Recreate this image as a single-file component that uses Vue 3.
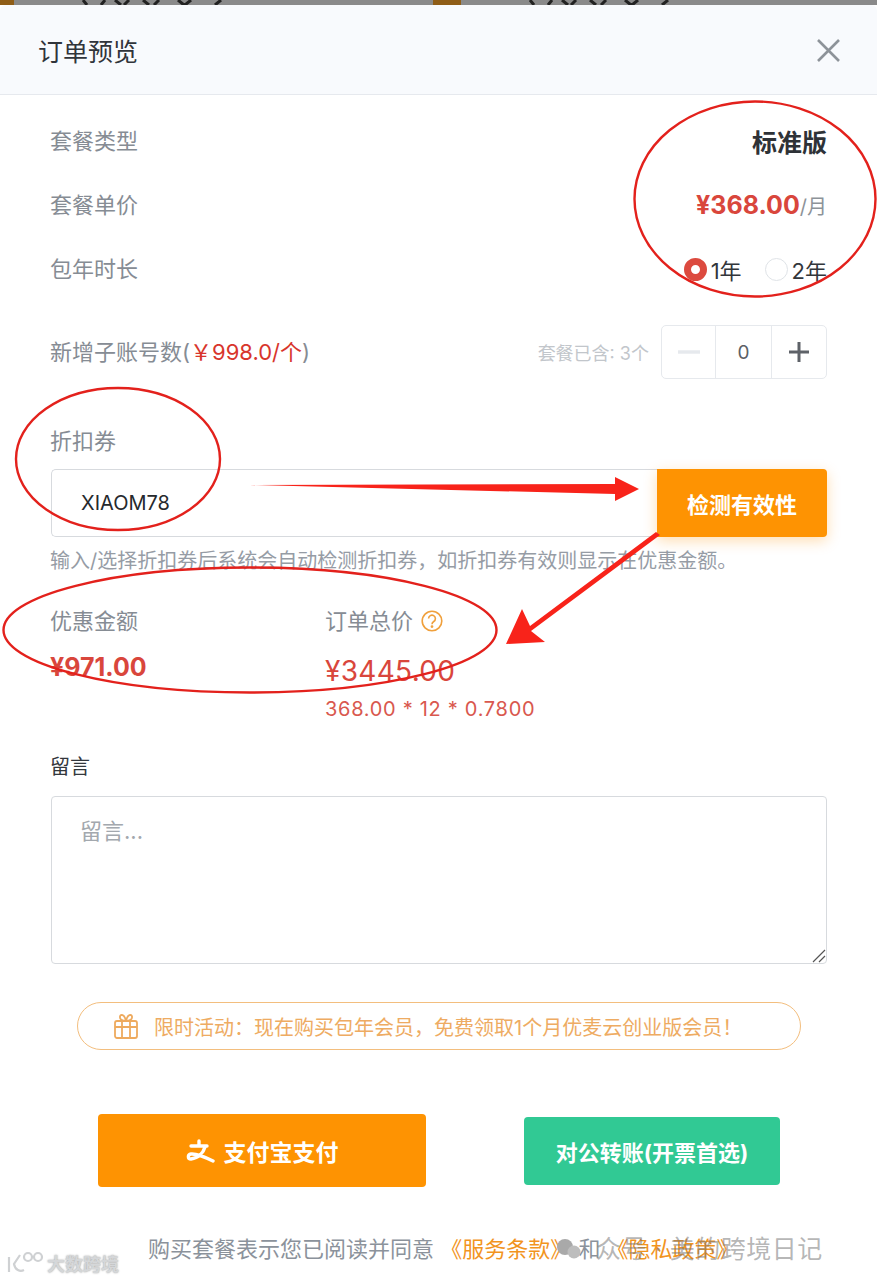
<script setup>
const tops = [0, 1];
</script>

<template>
  <div class="page">
    <div class="dimstrip">
      <div v-for="t in tops" :key="t" class="dimcell">
        <span class="dimaccent"></span>
        <svg class="dimglyph" width="170" height="5" viewBox="0 0 170 5" fill="none" stroke="#222" stroke-width="3">
          <path d="M4 0l4 5M22 5l4-5M42 5l-6-5M50 0l-5 5M70 5l-6-5M80 0l-5 5M105 5l-6-5M112 0l-6 5M142 0l-6 5" />
        </svg>
      </div>
    </div>
    <div class="modal">
      <header class="head">
        <h1 class="title">订单预览</h1>
        <svg class="close" width="26" height="26" viewBox="0 0 26 26" fill="none" stroke="#8d9399" stroke-width="2.6">
          <path d="M3 3l21 21M24 3L3 24" />
        </svg>
      </header>

      <div class="body">
        <div class="row r1">
          <span class="lab">套餐类型</span>
          <b class="plan">标准版</b>
        </div>
        <div class="row r2">
          <span class="lab">套餐单价</span>
          <span class="price"><b>¥368.00</b><i>/月</i></span>
        </div>
        <div class="row r3">
          <span class="lab">包年时长</span>
          <span class="radios">
            <span class="radio on"></span><span class="rtext">1年</span>
            <span class="radio off"></span><span class="rtext">2年</span>
          </span>
        </div>
        <div class="row r4">
          <span class="lab">新增子账号数(<em>￥998.0/个</em>)</span>
          <span class="stepwrap">
            <span class="incl">套餐已含: 3个</span>
            <span class="stepper">
              <span class="step minus"><svg width="22" height="4" viewBox="0 0 22 4"><rect width="22" height="3.4" y="0.3" fill="#e6e9ed" /></svg></span>
              <span class="step val">0</span>
              <span class="step plus"><svg width="20" height="20" viewBox="0 0 20 20"><path d="M0 10h20M10 0v20" stroke="#5e6268" stroke-width="3" fill="none" /></svg></span>
            </span>
          </span>
        </div>

        <div class="lab coupon-lab">折扣券</div>
        <div class="coupon">
          <div class="coupon-input">XIAOM78</div>
          <div class="coupon-btn">检测有效性</div>
        </div>
        <div class="hint">输入/选择折扣券后系统会自动检测折扣券，如折扣券有效则显示在优惠金额。</div>

        <div class="totals">
          <div class="tcol tleft">
            <div class="lab">优惠金额</div>
            <div class="disc">¥971.00</div>
          </div>
          <div class="tcol">
            <div class="lab withq">订单总价
              <svg class="q" width="22" height="22" viewBox="0 0 22 22" fill="none" stroke="#f0a03c" stroke-width="1.6">
                <circle cx="11" cy="11" r="9.8" />
                <path d="M7.6 8.6a3.4 3.4 0 1 1 5.2 2.9c-1.2.8-1.8 1.3-1.8 2.8" />
                <circle cx="11" cy="16.6" r="0.6" fill="#f0a03c" />
              </svg>
            </div>
            <div class="total">¥3445.00</div>
            <div class="formula">368.00 * 12 * 0.7800</div>
          </div>
        </div>

        <div class="msg-lab">留言</div>
        <div class="msg">
          <span class="ph">留言...</span>
          <svg class="grip" width="14" height="14" viewBox="0 0 14 14" stroke="#555" stroke-width="1.2" fill="none"><path d="M1 13L13 1M7 13l6-6" /></svg>
        </div>

        <div class="promo">
          <svg width="28" height="28" viewBox="0 0 28 28" fill="none" stroke="#eeaa5e" stroke-width="1.8" stroke-linejoin="round">
            <rect x="3" y="9" width="22" height="17" rx="2" />
            <path d="M3 15h22M10 9v17M18 9v17" />
            <path d="M14 9C10 9 7.500 7 8 4.500S12.500 2 14 9zM14 9c4 0 6.500-2 6-4.500S15.500 2 14 9z" />
          </svg>
          <span>限时活动：现在购买包年会员，免费领取1个月优麦云创业版会员！</span>
        </div>

        <div class="actions">
          <div class="pay alipay">
            <svg width="30" height="24" viewBox="0 0 30 24" fill="none" stroke="#fff" stroke-width="3.4" stroke-linecap="round" stroke-linejoin="round">
              <path d="M5 7h16M13 2v5M19 8c-1.500 5-6 11-14 12-3.500 0-3.500-4.500 0-5 5-.5 12 2 22 7" />
            </svg>
            <span>支付宝支付</span>
          </div>
          <div class="pay bank">对公转账(开票首选)</div>
        </div>

        <div class="terms">购买套餐表示您已阅读并同意 <a>《服务条款》</a> 和 <a>《隐私政策》</a></div>
      </div>
    </div>

    <!-- Annotations drawn over the screenshot -->
    <svg class="marks" width="877" height="1280" viewBox="0 0 877 1280" fill="none">
      <ellipse cx="755" cy="199" rx="120.500" ry="97.500" stroke="#e3211c" stroke-width="2.400" />
      <ellipse cx="118" cy="459" rx="102" ry="71" stroke="#e3211c" stroke-width="2.400" />
      <ellipse cx="250" cy="630" rx="246.500" ry="62.500" stroke="#e3211c" stroke-width="2.400" />
      <path d="M250 485L615 484V477L639 489L615 501V494Z" fill="#f8231a" />
      <path d="M660 535L531 631L545 642L506 644L522 609L530 626L656 532Z" fill="#f8231a" />
    </svg>

    <div class="wm-text">众号 · 美的跨境日记</div>
    <div class="wm-left">
      <svg width="40" height="24" viewBox="0 0 40 24" fill="none" stroke="#cfd1d3" stroke-width="2.200">
        <path d="M3 6v15M14 4L8 13c1 6 6 8 10 6" />
        <circle cx="22" cy="6" r="4" /><circle cx="32" cy="6" r="4" />
      </svg>
      <span>大数跨境</span>
    </div>
    <svg class="wm-bubble" width="26" height="22" viewBox="0 0 26 22">
      <circle cx="9" cy="9" r="8" fill="#a9a9a9" />
      <circle cx="18" cy="14" r="6.500" fill="#bdbdbd" />
    </svg>
  </div>
</template>

<style>
html, body { margin: 0; background: #fff; }
</style>

<style scoped>
.page {
  position: relative;
  width: 877px;
  height: 1280px;
  overflow: hidden;
  background: #fff;
  font-family: "Inter", "Noto Sans CJK SC", "Liberation Sans", sans-serif;
}
.dimstrip { display: flex; height: 5px; background: #8a8a8a; overflow: hidden; }
.dimcell { display: flex; width: 270px; padding-left: 0; }
.dimcell + .dimcell { margin-left: 0; }
.dimstrip { justify-content: space-between; }
.dimcell { width: 443px; }
.dimaccent { width: 14px; height: 5px; background: #8f5d17; margin-right: 65px; }
.dimcell + .dimcell .dimaccent { margin-left: -6px; width: 28px; }
.modal { display: flex; flex-direction: column; }
.head {
  height: 89px;
  display: flex;
  align-items: center;
  justify-content: space-between;
  padding: 0 36px 0 38px;
  background: #f8fafd;
  border-bottom: 1px solid #e6e9ee;
  border-radius: 6px 6px 0 0;
}
.title { margin: 0; font-size: 25px; font-weight: 400; color: #30343a; }
.close { display: block; }
.body { padding: 0 50px; }
.row { display: flex; justify-content: space-between; align-items: center; }
.lab { font-size: 22px; color: #868c94; line-height: 32px; }
.r1 { margin-top: 30px; height: 32px; }
.r2 { margin-top: 32px; height: 32px; }
.r3 { margin-top: 32px; height: 32px; }
.r4 { margin-top: 40px; height: 54px; }
.plan { font-size: 25px; font-weight: 700; color: #2e3237; }
.price b { font-size: 25px; font-weight: 700; color: #d9463c; }
.price i { font-style: normal; font-size: 20px; color: #8d9399; }
.radios { display: flex; align-items: center; }
.radio { box-sizing: border-box; width: 23px; height: 23px; border-radius: 50%; }
.radio.on { border: 7px solid #dc4a3f; background: #fff; }
.radio.off { border: 1px solid #dfe3e7; margin-left: 23px; }
.rtext { font-size: 22px; color: #32363b; margin-left: 4px; }
.lab em { font-style: normal; color: #d8352c; }
.stepwrap { display: flex; align-items: center; gap: 12px; }
.incl { font-size: 18px; color: #c2c6cb; }
.stepper {
  display: flex;
  width: 166px;
  height: 54px;
  box-sizing: border-box;
  border: 1px solid #e6e9ed;
  border-radius: 5px;
}
.step { display: flex; align-items: center; justify-content: center; }
.step svg { display: block; }
.minus { width: 53px; }
.val { flex: 1; border-left: 1px solid #e6e9ed; border-right: 1px solid #e6e9ed; font-size: 19px; color: #5c6066; }
.plus { width: 54px; }
.coupon-lab { margin-top: 46px; }
.coupon { display: flex; height: 68px; margin-top: 12px; margin-left: 1px; }
.coupon-input {
  flex: 1;
  box-sizing: border-box;
  border: 1px solid #d7dade;
  border-right: 0;
  border-radius: 5px 0 0 5px;
  display: flex;
  align-items: center;
  padding-left: 29px;
  font-size: 20px;
  color: #26292d;
}
.coupon-btn {
  width: 170px;
  display: flex;
  align-items: center;
  justify-content: center;
  background: #fe9302;
  color: #fff;
  font-size: 22px;
  font-weight: 700;
  border-radius: 0 4px 4px 0;
  box-shadow: 0 4px 14px rgba(254, 147, 2, 0.3);
}
.hint { margin-top: 8px; font-size: 20px; color: #969ca5; line-height: 32px; }
.totals { display: flex; margin-top: 28px; }
.tleft { width: 275px; }
.withq { display: flex; align-items: center; gap: 8px; }
.q { display: block; }
.disc { margin-top: 14px; font-size: 25px; font-weight: 700; color: #d9463c; line-height: 32px; }
.total { margin-top: 18px; font-size: 28px; color: #d9463c; line-height: 32px; letter-spacing: 0.3px; }
.formula { margin-top: 8px; font-size: 20px; color: #d9584e; line-height: 28px; letter-spacing: 0.7px; }
.msg-lab { margin-top: 30px; font-size: 20px; color: #33373c; line-height: 28px; }
.msg {
  position: relative;
  margin: 15px 0 0 1px;
  height: 168px;
  box-sizing: border-box;
  border: 1px solid #d7dade;
  border-radius: 4px;
  padding: 16px 28px;
}
.ph { font-size: 22px; color: #a3a8ae; }
.grip { position: absolute; right: 0; bottom: 0; }
.promo {
  margin: 38px 26px 0 27px;
  height: 48px;
  box-sizing: border-box;
  border: 1px solid #f3be7e;
  border-radius: 24px;
  display: flex;
  align-items: center;
  padding-left: 34px;
  gap: 14px;
  font-size: 20px;
  color: #eeab62;
}
.actions { display: flex; align-items: center; margin-top: 64px; padding: 0 47px 0 48px; justify-content: space-between; }
.pay { display: flex; align-items: center; justify-content: center; color: #fff; font-weight: 700; border-radius: 4px; }
.alipay { width: 328px; height: 73px; background: #fe9302; font-size: 23px; gap: 8px; }
.bank { width: 256px; height: 68px; background: #31c994; font-size: 22px; }
.terms { margin-top: 46px; margin-left: 98px; font-size: 22px; color: #8b929b; line-height: 32px; white-space: nowrap; }
.terms a { color: #f2941e; }
.marks { position: absolute; left: 0; top: 0; pointer-events: none; }
.wm-text {
  position: absolute;
  left: 596px;
  top: 1229px;
  font-size: 25px;
  color: rgba(120, 120, 120, 0.55);
  letter-spacing: 0.5px;
  white-space: nowrap;
}
.wm-bubble { position: absolute; left: 556px; top: 1238px; }
.wm-left {
  position: absolute;
  left: 6px;
  top: 1250px;
  display: flex;
  align-items: center;
  gap: 1px;
  font-size: 18px;
  font-weight: 700;
  color: #d5d7d9;
  text-shadow: 0 0 2px #9a9a9a;
}
</style>
